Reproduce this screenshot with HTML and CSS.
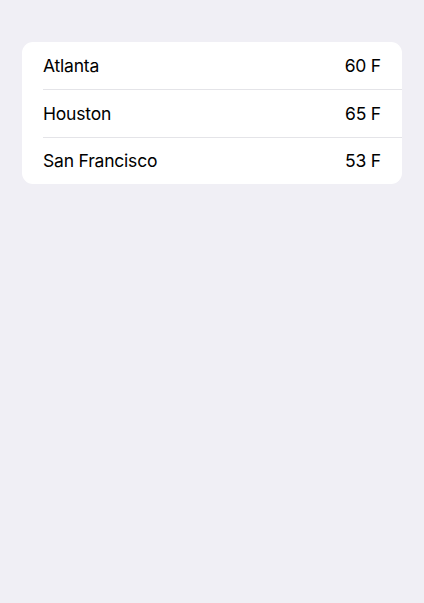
FILE: index.html
```html
<!DOCTYPE html>
<html>
<head>
<meta charset="utf-8">
<link rel="stylesheet" href="styles.css">
</head>
<body>
<div class="screen">
  <ul class="list">
    <li class="row"><span class="city">Atlanta</span><span class="temp">60 F</span></li>
    <li class="row"><span class="city">Houston</span><span class="temp">65 F</span></li>
    <li class="row"><span class="city">San Francisco</span><span class="temp">53 F</span></li>
  </ul>
</div>
</body>
</html>
```
FILE: styles.css
```css
html, body {
  margin: 0;
  padding: 0;
  background: #f0eff5;
}
.screen {
  width: 424px;
  height: 603px;
  box-sizing: border-box;
  padding: 42px 22px 0 22px;
  font-family: Inter, "Liberation Sans", sans-serif;
  color: #000;
}
.list {
  list-style: none;
  margin: 0;
  padding: 0 0 0 21px;
  background: #fff;
  border-radius: 11px;
}
.row {
  display: flex;
  justify-content: space-between;
  align-items: center;
  box-sizing: border-box;
  height: 47.4px;
  padding-right: 21px;
  font-size: 17.5px;
  letter-spacing: -0.2px;
}
.row + .row {
  border-top: 1px solid #e4e4e8;
}
```
